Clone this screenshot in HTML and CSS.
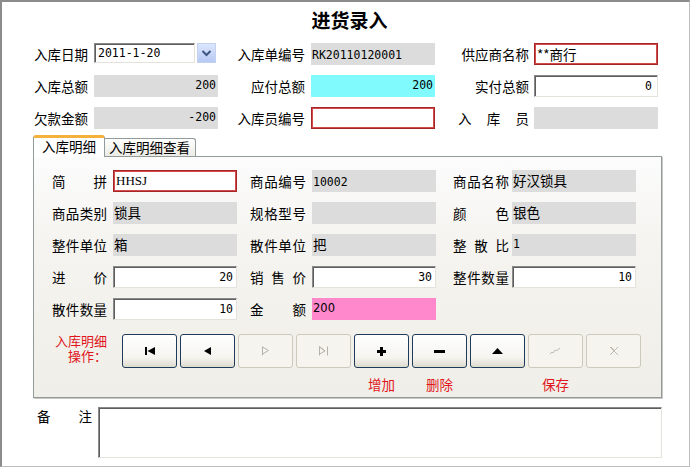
FILE: index.html
```html
<!DOCTYPE html>
<html lang="zh-CN">
<head>
<meta charset="utf-8">
<title>进货录入</title>
<link rel="stylesheet" href="styles.css">
</head>
<body>
<div class="window">
  <h1 class="title">进货录入</h1>

  <div class="head">
    <div class="lbl">入库日期</div>
    <div class="date">
      <div class="fld sunk date-input">2011-1-20</div>
      <div class="drop"><svg width="17" height="18" viewBox="0 0 17 18"><path d="M4.5 7 L8.5 11 L12.5 7" fill="none" stroke="#3f5582" stroke-width="2"/></svg></div>
    </div>
    <div class="lbl">入库单编号</div>
    <div class="fld grey num mid">RK20110120001</div>
    <div class="lbl r3">供应商名称</div>
    <div class="fld red">**商行</div>

    <div class="lbl">入库总额</div>
    <div class="fld grey num right">200</div>
    <div class="lbl">应付总额</div>
    <div class="fld grey cyan num right">200</div>
    <div class="lbl r3">实付总额</div>
    <div class="fld sunk num right pad-r">0</div>

    <div class="lbl">欠款金额</div>
    <div class="fld grey num right">-200</div>
    <div class="lbl">入库员编号</div>
    <div class="fld red"></div>
    <div class="lbl r3 spread">入库员</div>
    <div class="fld grey"></div>
  </div>

  <div class="tabs">
    <div class="tab active">入库明细</div>
    <div class="tab">入库明细查看</div>
  </div>

  <div class="panel">
    <div class="detail">
      <div class="dl c1">简拼</div>
      <div class="fld red mono">HHSJ</div>
      <div class="dl c2">商品编号</div>
      <div class="fld grey num mid">10002</div>
      <div class="dl c3">商品名称</div>
      <div class="fld grey">好汉锁具</div>

      <div class="dl c1">商品类别</div>
      <div class="fld grey">锁具</div>
      <div class="dl c2">规格型号</div>
      <div class="fld grey"></div>
      <div class="dl c3">颜色</div>
      <div class="fld grey">银色</div>

      <div class="dl c1">整件单位</div>
      <div class="fld grey">箱</div>
      <div class="dl c2">散件单位</div>
      <div class="fld grey">把</div>
      <div class="dl c3">整散比</div>
      <div class="fld grey num">1</div>

      <div class="dl c1">进价</div>
      <div class="fld sunk num right">20</div>
      <div class="dl c2">销售价</div>
      <div class="fld sunk num right">30</div>
      <div class="dl c3">整件数量</div>
      <div class="fld sunk num right">10</div>

      <div class="dl c1">散件数量</div>
      <div class="fld sunk num right">10</div>
      <div class="dl c2">金额</div>
      <div class="fld grey pink sans">200</div>
      <div></div>
      <div></div>
    </div>

    <div class="ops">
      <div class="ops-lbl"><div>入库明细</div><div>操作：</div></div>
      <div class="btn"><svg width="10" height="8" viewBox="0 0 10 8"><rect x="0" y="0" width="2" height="8"/><path d="M10 0 L2.5 4 L10 8Z"/></svg></div>
      <div class="btn"><svg width="7" height="8" viewBox="0 0 7 8"><path d="M7 0 L0 4 L7 8Z"/></svg></div>
      <div class="btn off"><svg width="9" height="10" viewBox="0 0 9 10"><path d="M1.5 0.5 V9.5 M1.5 1 L7.5 4.5 L1.5 8" fill="none" stroke="#b5b3a8"/></svg></div>
      <div class="btn off"><svg width="11" height="10" viewBox="0 0 11 10"><path d="M1.5 9.5 V0.5 L7 5 M9.5 0.5 V9.5 M1.5 1 L7 5 L1.5 8" fill="none" stroke="#b5b3a8"/></svg></div>
      <div class="btn"><svg width="9" height="9" viewBox="0 0 9 9"><rect x="3" y="0" width="3" height="9"/><rect x="0" y="3" width="9" height="3"/></svg></div>
      <div class="btn"><svg width="11" height="3" viewBox="0 0 11 3"><rect x="0" y="0" width="11" height="3"/></svg></div>
      <div class="btn"><svg width="11" height="6" viewBox="0 0 11 6"><path d="M0 6 L5.5 0 L11 6Z"/></svg></div>
      <div class="btn off"><svg width="13" height="8" viewBox="0 0 13 8"><path d="M1 7 L3 5 L4 6 L6 3 L8 3.5 L11 1" fill="none" stroke="#bebcb1"/></svg></div>
      <div class="btn off"><svg width="10" height="10" viewBox="0 0 10 10"><path d="M1 1 L9 9 M9 1 L1 9 M2 1 L5 4" fill="none" stroke="#bebcb1"/></svg></div>

      <div class="cap cap-add">增加</div>
      <div class="cap cap-del">删除</div>
      <div class="cap cap-save">保存</div>
    </div>
  </div>

  <div class="remark">
    <div class="rm-lbl">备注</div>
    <div class="rm-box"></div>
  </div>
</div>
</body>
</html>
```
FILE: styles.css
```css
html, body {
  margin: 0;
  padding: 0;
  background: #ffffff;
}

.window {
  width: 690px;
  height: 467px;
  box-sizing: border-box;
  border-style: solid;
  border-width: 2px 1px 1px 2px;
  border-color: #8c8c8c #bdbdbd #bdbdbd #8c8c8c;
  background: #ffffff;
  font-family: "Noto Sans CJK SC", sans-serif;
  font-size: 13.5px;
  color: #000;
  overflow: hidden;
}

.title {
  margin: 0 0 11px 0;
  padding: 5px 0 0 8px;
  height: 25px;
  line-height: 25px;
  font-size: 19px;
  font-weight: bold;
  text-align: center;
}

/* ---------- header form ---------- */
.head {
  display: grid;
  grid-template-columns: 92px 124px 93px 124px 99px 124px;
  grid-auto-rows: 22px;
  row-gap: 10px;
}

.lbl {
  align-self: center;
  text-align: right;
  padding-right: 6px;
  line-height: 16px;
  white-space: nowrap;
}

.lbl.r3 {
  padding-right: 5px;
}

.lbl.spread {
  padding-left: 23px;
  text-align: justify;
  text-align-last: justify;
}

.fld {
  box-sizing: border-box;
  height: 22px;
  white-space: nowrap;
  overflow: hidden;
}

.grey {
  background: #dcdcdc;
  padding: 3px 2px 0 1px;
  line-height: 14px;
}

.grey.mid {
  padding-top: 5px;
}

.cyan {
  background: #80fafc;
}

.pink {
  background: #ff88cc;
}

.num {
  font-family: "DejaVu Sans Mono", "Noto Sans CJK SC", monospace;
  font-size: 11.5px;
}

.mono {
  font-family: "Liberation Serif", "Noto Sans CJK SC", serif;
  font-size: 13px;
}

.sans {
  font-family: "DejaVu Sans", sans-serif;
  font-size: 11.5px;
}

.right {
  text-align: right;
}

.sunk {
  background: #ffffff;
  border: 1px solid;
  border-color: #8a8a8a #e4e2da #e4e2da #8a8a8a;
  box-shadow: inset 1px 1px 0 #5e5e5e;
  padding: 2px 3px 0 3px;
  line-height: 16px;
}

.sunk.pad-r {
  padding-right: 5px;
}

.red {
  background: #ffffff;
  border: 1px solid #a62628;
  box-shadow: inset 0 0 0 1px #d24a4a;
  padding: 2px 2px 0 2px;
  line-height: 16px;
}

.date {
  display: flex;
  gap: 2px;
  align-items: flex-start;
}

.date-input {
  width: 101px;
  height: 20px;
  padding-top: 1px;
  font-family: "DejaVu Sans Mono", monospace;
  font-size: 11.5px;
}

.drop {
  width: 19px;
  height: 20px;
  box-sizing: border-box;
  border: 1px solid #c3d1f0;
  background: linear-gradient(#dce6fd, #b7c9f4);
  display: flex;
  align-items: center;
  justify-content: center;
}

/* ---------- tabs ---------- */
.tabs {
  display: flex;
  align-items: flex-start;
  height: 21px;
  margin: 6px 0 0 31px;
}

.tab {
  box-sizing: border-box;
  line-height: 15px;
  white-space: nowrap;
}

.tab.active {
  position: relative;
  z-index: 1;
  width: 72px;
  height: 22px;
  text-align: center;
  background: #ffffff;
  border: 1px solid #919b9c;
  border-top: 3px solid #f4b13c;
  border-bottom: none;
  border-radius: 3px 3px 0 0;
  padding-top: 1px;
}

.tab:not(.active) {
  margin-top: 3px;
  width: 91px;
  height: 18px;
  padding: 1px 0 0 4px;
  border: 1px solid #919b9c;
  border-left: none;
  border-bottom: none;
  border-radius: 0 3px 0 0;
  background: linear-gradient(#ffffff, #ecebe4);
}

/* ---------- panel ---------- */
.panel {
  margin-left: 31px;
  width: 629px;
  height: 242px;
  box-sizing: border-box;
  border: 1px solid #919b9c;
  background: linear-gradient(#fcfcfd, #f5f4f0 35%, #f0eee8);
  box-shadow: 1px 1px 0 #c9c8c2;
  padding: 13px 0 0 18px;
}

.detail {
  display: grid;
  grid-template-columns: 61px 124px 75px 124px 76px 124px;
  grid-auto-rows: 22px;
  row-gap: 10px;
}

.dl {
  align-self: center;
  line-height: 16px;
  text-align: justify;
  text-align-last: justify;
  white-space: nowrap;
}

.dl.c1 {
  padding-right: 6px;
}

.dl.c2 {
  padding-left: 13px;
  padding-right: 6px;
}

.dl.c3 {
  padding-left: 17px;
  padding-right: 3px;
}

.ops {
  display: grid;
  grid-template-columns: 67px repeat(9, 55px);
  grid-template-rows: 34px 14px;
  column-gap: 3px;
  row-gap: 9px;
  margin-top: 14px;
}

.ops-lbl {
  width: 55px;
  font-family: "Liberation Sans", "Noto Sans CJK SC", sans-serif;
  font-size: 13px;
  line-height: 15px;
  text-align: right;
  color: #e0161c;
}

.btn {
  box-sizing: border-box;
  border: 1px solid #1f3b5c;
  border-radius: 3px;
  background: linear-gradient(#ffffff, #f5f4ef 70%, #dedbcf);
  display: flex;
  align-items: center;
  justify-content: center;
}

.btn svg {
  fill: #000;
}

.btn.off {
  border-color: #ccc9bd;
  background: #f5f4ef;
}

.cap {
  grid-row: 2;
  line-height: 14px;
  text-align: center;
  color: #e0161c;
}

.cap-add {
  grid-column: 6;
}

.cap-del {
  grid-column: 7;
}

.cap-save {
  grid-column: 9;
}

/* ---------- remark ---------- */
.remark {
  display: flex;
  align-items: flex-start;
  margin: 9px 0 0 35px;
}

.rm-lbl {
  width: 55px;
  margin-right: 6px;
  padding-top: 2px;
  line-height: 14px;
  text-align: justify;
  text-align-last: justify;
}

.rm-box {
  width: 564px;
  height: 51px;
  box-sizing: border-box;
  background: #ffffff;
  border: 1px solid;
  border-color: #8a8a8a #e4e2da #e4e2da #8a8a8a;
  box-shadow: inset 1px 1px 0 #5e5e5e;
}
```
